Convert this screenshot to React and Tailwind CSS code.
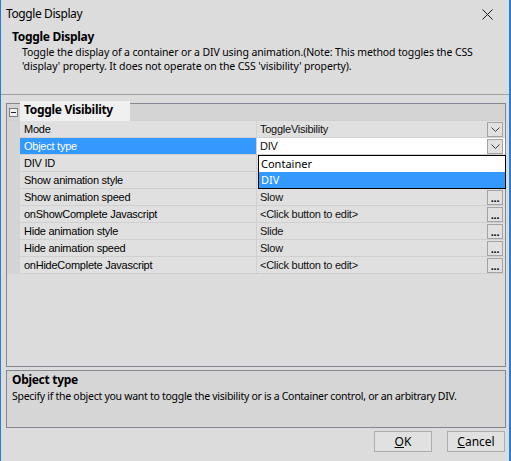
import React from "react";

const rows = [
  { name: "Mode", value: "ToggleVisibility", btn: "drop" },
  { name: "Object type", value: "DIV", btn: "drop", selected: true },
  { name: "DIV ID", value: "" },
  { name: "Show animation style", value: "" },
  { name: "Show animation speed", value: "Slow", btn: "dots" },
  { name: "onShowComplete Javascript", value: "<Click button to edit>", btn: "dots" },
  { name: "Hide animation style", value: "Slide", btn: "dots" },
  { name: "Hide animation speed", value: "Slow", btn: "dots" },
  { name: "onHideComplete Javascript", value: "<Click button to edit>", btn: "dots" },
];

function Chevron() {
  return (
    <svg width="9" height="5" viewBox="0 0 9 5" className="block">
      <path d="M0.5 0.5 L4.5 4.5 L8.5 0.5" fill="none" stroke="#404040" strokeWidth="1" />
    </svg>
  );
}

function CellButton({ kind }) {
  return (
    <div className="w-[16px] h-[15px] mr-[2px] border border-[#a3a3a3] bg-[#e1e1e1] flex items-center justify-center">
      {kind === "drop" ? (
        <Chevron />
      ) : (
        <span className="text-[11px] font-bold leading-none mt-[2px] text-black">...</span>
      )}
    </div>
  );
}

export default function App() {
  return (
    <div
      className="w-[511px] h-[461px] bg-[#dcdcdc] border-l border-r-2 border-[#2b7cd3] flex flex-col text-black"
      style={{ fontFamily: '"Noto Sans", "Open Sans", sans-serif' }}
    >
      {/* title bar */}
      <div className="h-[28px] flex items-center justify-between pl-[5px] pr-[16px] text-[12px]">
        <span className="tracking-[-0.4px]">Toggle Display</span>
        <svg width="11" height="11" viewBox="0 0 11 11">
          <path d="M0.5 0.5 L10.5 10.5 M10.5 0.5 L0.5 10.5" stroke="#1a1a1a" strokeWidth="1" />
        </svg>
      </div>

      {/* header */}
      <div className="h-[67px] border-b border-[#a0a0a0] pl-[11px] pt-[1px] text-[10.5px] leading-[15px] whitespace-nowrap">
        <div className="font-bold text-[12px] tracking-[-0.3px]">Toggle Display</div>
        <div className="pl-[10px] pt-[1px] leading-[14px] tracking-[-0.12px]">
          <div>Toggle the display of a container or a DIV using animation.(Note: This method toggles the CSS</div>
          <div>'display' property. It does not operate on the CSS 'visibility' property).</div>
        </div>
      </div>

      {/* property grid */}
      <div
        className="relative mt-[8px] ml-[5px] w-[500px] h-[264px] border border-[#828790] bg-[#dcdcdc] text-[11px]"
        style={{ fontFamily: '"Liberation Sans", Arial, sans-serif' }}
      >
        <div className="flex h-[17px] bg-[#d4d4d4] border-b border-[#d0d0d0]">
          <div className="w-[13px] flex items-center justify-center">
            <div className="w-[9px] h-[9px] border border-[#7a7a7a] bg-[#f0f0f0] flex items-center justify-center">
              <div className="w-[5px] h-px bg-[#222]" />
            </div>
          </div>
        </div>
        {/* category caption */}
        <div
          className="absolute left-[13px] top-[-3px] w-[110px] h-[20px] bg-[#f0f0f0] flex items-end pl-[4px] pb-[2px] font-bold text-[12px]"
          style={{ fontFamily: '"Noto Sans", sans-serif' }}
        >
          <span className="tracking-[-0.3px]">Toggle Visibility</span>
        </div>

        {rows.map((r) => (
          <div key={r.name} className="flex h-[17px] bg-[#d4d4d4] tracking-[-0.25px]">
            <div className="w-[13px]" />
            <div
              className={
                "w-[237px] h-[17px] border-b border-r border-[#d0d0d0] flex items-center pl-[4px] " +
                (r.selected ? "bg-[#3399ff] text-white" : "bg-[#e0e0e0]")
              }
            >
              {r.name}
            </div>
            <div
              className={
                "flex-1 h-[17px] border-b border-[#d0d0d0] flex items-center justify-between pl-[3px] " +
                (r.selected ? "bg-white" : "bg-[#e0e0e0]")
              }
            >
              <span className="text-[#111]">{r.value}</span>
              {r.btn && <CellButton kind={r.btn} />}
            </div>
          </div>
        ))}

        {/* open dropdown list */}
        <div
          className="absolute left-[251px] top-[51px] w-[248px] h-[34px] border border-black bg-white text-[11px]"
          style={{ fontFamily: '"Noto Sans", sans-serif' }}
        >
          <div className="h-[16px] flex items-center pl-[2px]">Container</div>
          <div className="h-[16px] flex items-center pl-[2px] bg-[#3399ff] text-white">DIV</div>
        </div>
      </div>

      {/* description panel */}
      <div className="mt-[3px] ml-[5px] w-[500px] h-[58px] border border-[#828790] bg-[#d6d6d6] pl-[5px] pt-[1px] text-[10.5px] leading-[16px] whitespace-nowrap">
        <div className="font-bold text-[12px] tracking-[-0.3px]">Object type</div>
        <div className="tracking-[-0.28px]">
          Specify if the object you want to toggle the visibility or is a Container control, or an arbitrary DIV.
        </div>
      </div>

      {/* buttons */}
      <div className="flex justify-end gap-[15px] mt-[3px] pr-[4px] text-[12px]">
        <button className="w-[58px] h-[21px] border border-[#adadad] bg-[#e1e1e1] flex items-center justify-center">
          <span><span className="underline">O</span>K</span>
        </button>
        <button className="w-[58px] h-[21px] border border-[#adadad] bg-[#e1e1e1] flex items-center justify-center">
          <span><span className="underline">C</span>ancel</span>
        </button>
      </div>
    </div>
  );
}
